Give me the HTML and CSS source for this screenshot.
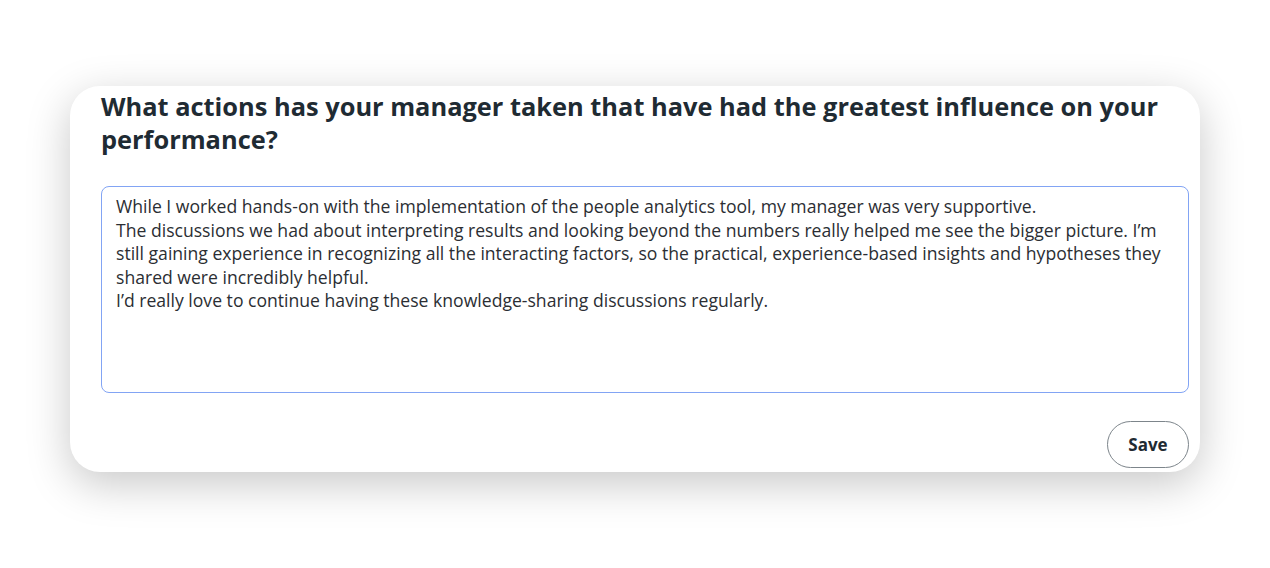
FILE: index.html
```html
<!DOCTYPE html>
<html lang="en">
<head>
<meta charset="utf-8">
<title>Manager feedback</title>
<link rel="stylesheet" href="styles.css">
</head>
<body>
<main class="card">
  <h2 class="question">What actions has your manager taken that have had the greatest influence on your performance?</h2>
  <div class="answer">While I worked hands-on with the implementation of the people analytics tool, my manager was very supportive.
The discussions we had about interpreting results and looking beyond the numbers really helped me see the bigger picture. I’m still gaining experience in recognizing all the interacting factors, so the practical, experience-based insights and hypotheses they shared were incredibly helpful.
I’d really love to continue having these knowledge-sharing discussions regularly.</div>
  <div class="actions">
    <button class="save" type="button">Save</button>
  </div>
</main>
</body>
</html>
```
FILE: styles.css
```css
html, body {
  margin: 0;
  padding: 0;
  background: #ffffff;
}
body {
  box-sizing: border-box;
  min-height: 568px;
  font-family: "Open Sans", "Noto Sans", sans-serif;
  color: #2a2e33;
  padding: 86px 0 0 70px;
}
.card {
  box-sizing: border-box;
  width: 1130px;
  height: 386px;
  background: #fff;
  border-radius: 30px;
  box-shadow: 0 12px 44px rgba(0, 0, 0, 0.22);
  padding: 4px 11px 0 31px;
  display: flex;
  flex-direction: column;
}
.question {
  margin: 0;
  font-size: 25.4px;
  line-height: 33px;
  font-weight: 700;
  color: #1f2b33;
}
.answer {
  box-sizing: border-box;
  margin-top: 30px;
  height: 207px;
  border: 1.5px solid #82a4f4;
  border-radius: 8px;
  padding: 8px 14px;
  font-size: 17.6px;
  line-height: 23.5px;
  white-space: pre-wrap;
  color: #2b2e33;
}
.actions {
  display: flex;
  justify-content: flex-end;
  margin-top: 28px;
}
.save {
  width: 82px;
  height: 47px;
  border: 1.5px solid #7d858b;
  border-radius: 24px;
  background: #fff;
  font-family: "Open Sans", "Noto Sans", sans-serif;
  font-weight: 700;
  font-size: 17px;
  color: #1f2b33;
  cursor: pointer;
}
```
